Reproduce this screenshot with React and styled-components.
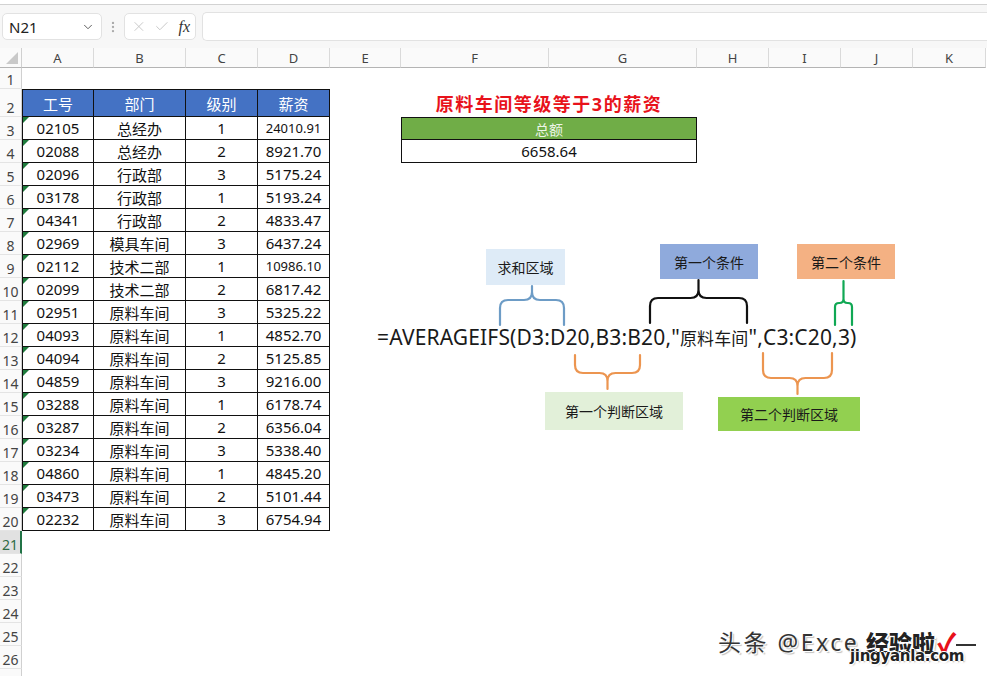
import React from "react";
import styled, { createGlobalStyle } from "styled-components";
import { ChevronDown, X, Check, EllipsisVertical } from "lucide-react";

const GlobalStyle = createGlobalStyle`
  body {
    margin: 0;
    background: #fff;
    font-family: "Noto Sans", "Noto Sans CJK SC", sans-serif;
  }
`;

const COLS = ["A", "B", "C", "D", "E", "F", "G", "H", "I", "J", "K"];

const rows = [
  ["02105", "总经办", "1", "24010.91", true],
  ["02088", "总经办", "2", "8921.70"],
  ["02096", "行政部", "3", "5175.24"],
  ["03178", "行政部", "1", "5193.24"],
  ["04341", "行政部", "2", "4833.47"],
  ["02969", "模具车间", "3", "6437.24"],
  ["02112", "技术二部", "1", "10986.10", true],
  ["02099", "技术二部", "2", "6817.42"],
  ["02951", "原料车间", "3", "5325.22"],
  ["04093", "原料车间", "1", "4852.70"],
  ["04094", "原料车间", "2", "5125.85"],
  ["04859", "原料车间", "3", "9216.00"],
  ["03288", "原料车间", "1", "6178.74"],
  ["03287", "原料车间", "2", "6356.04"],
  ["03234", "原料车间", "3", "5338.40"],
  ["04860", "原料车间", "1", "4845.20"],
  ["03473", "原料车间", "2", "5101.44"],
  ["02232", "原料车间", "3", "6754.94"],
];

function Brace({ x, y, w, h, mid, color, down, r = 6 }) {
  const c = w / 2;
  const a = 1;
  const b = w - 1;
  const d = `M${a} ${h} V${mid + r} Q${a} ${mid} ${a + r} ${mid} H${c - r} Q${c} ${mid} ${c} ${mid - r} V1 M${c} ${mid - r} Q${c} ${mid} ${c + r} ${mid} H${b - r} Q${b} ${mid} ${b} ${mid + r} V${h}`;
  return (
    <BraceSvg $x={x} $y={y} width={w} height={h} viewBox={`0 0 ${w} ${h}`}>
      <g transform={down ? `translate(0 ${h}) scale(1 -1)` : undefined}>
        <path d={d} fill="none" stroke={color} strokeWidth="2.2" strokeLinecap="round" />
      </g>
    </BraceSvg>
  );
}

export default function App() {
  return (
    <Page>
      <GlobalStyle />
      <TopStrip />
      <FormulaBar>
        <NameBox>
          N21
          <ChevronDown size={14} color="#555" strokeWidth={1.6} />
        </NameBox>
        <Dots>
          <EllipsisVertical size={14} color="#aaa" />
        </Dots>
        <FxBox>
          <X size={17} color="#c4c4c4" strokeWidth={1.4} />
          <Check size={17} color="#c4c4c4" strokeWidth={1.4} />
          <Fx>fx</Fx>
        </FxBox>
        <FormulaInput />
      </FormulaBar>

      <Sheet>
        <Corner>
          <CornerTri />
        </Corner>
        {COLS.map((c) => (
          <ColHead key={c}>{c}</ColHead>
        ))}

        <RowHead>1</RowHead>
        <Blank $span={11} />

        <RowHead>2</RowHead>
        {["工号", "部门", "级别", "薪资"].map((t, i) => (
          <HeadCell key={t} $first={i === 0}>
            {t}
          </HeadCell>
        ))}
        <Blank />
        <Title $span={2}>原料车间等级等于3的薪资</Title>
        <Blank $span={4} />

        {rows.map((r, i) => {
          const n = i + 3;
          return (
            <React.Fragment key={n}>
              <RowHead>{n}</RowHead>
              <Cell $first $flag>
                {r[0]}
              </Cell>
              <Cell>{r[1]}</Cell>
              <Cell>{r[2]}</Cell>
              <Cell $small={r[4]}>{r[3]}</Cell>
              <Blank />
              {n === 3 && <TotalHead $span={2}>总额</TotalHead>}
              {n === 4 && <TotalValue $span={2}>6658.64</TotalValue>}
              {n > 4 && <Blank $span={2} />}
              <Blank $span={4} />
            </React.Fragment>
          );
        })}

        {[21, 22, 23, 24, 25, 26, 27].map((n) => (
          <React.Fragment key={n}>
            <RowHead $active={n === 21}>{n < 27 ? n : ""}</RowHead>
            <Blank $span={11} />
          </React.Fragment>
        ))}
      </Sheet>

      <Note $x={486} $y={249} $w={79} $h={36} $bg="#deebf7">求和区域</Note>
      <Note $x={660} $y={244} $w={98} $h={35} $bg="#8faadc">第一个条件</Note>
      <Note $x={797} $y={244} $w={98} $h={35} $bg="#f4b183">第二个条件</Note>
      <Note $x={545} $y={392} $w={138} $h={38} $bg="#e2f0d9">第一个判断区域</Note>
      <Note $x={718} $y={397} $w={142} $h={34} $bg="#92d050">第二个判断区域</Note>

      <Brace x={499} y={285} w={66} h={40} mid={15} color="#6d9cc6" r={8} />
      <Brace x={649} y={279} w={99} h={44} mid={19} color="#111" r={8} />
      <Brace x={834} y={280} w={19} h={45} mid={23} color="#10a854" r={4} />
      <Brace x={574} y={355} w={67} h={35} mid={17} color="#ec9550" down r={8} />
      <Brace x={762} y={353} w={71} h={42} mid={17} color="#ec9550" down r={8} />

      <Formula>
        =AVERAGEIFS(D3:D20,B3:B20,"<Cjk>原料车间</Cjk>",C3:C20,3)
      </Formula>

      <Watermark>
        <WmText>头条 @Exce</WmText>
        <WmLogo>
          经验啦<WmCheck>✓</WmCheck>
        </WmLogo>
        <WmSite>jingyanla.com</WmSite>
        <WmDash />
      </Watermark>
    </Page>
  );
}

const Page = styled.div`
  position: relative;
  width: 987px;
  height: 676px;
  overflow: hidden;
  background: #fff;
`;

const TopStrip = styled.div`
  height: 4px;
  background: #fff;
  border-bottom: 1px solid #d2d2d2;
`;

const FormulaBar = styled.div`
  display: flex;
  align-items: center;
  height: 43px;
  padding: 0 0 0 2px;
  background: #f7f7f7;
  box-sizing: border-box;
`;

const NameBox = styled.div`
  display: flex;
  align-items: center;
  justify-content: space-between;
  width: 100px;
  height: 27px;
  box-sizing: border-box;
  padding: 0 6px;
  background: #fff;
  border: 1px solid #e2e2e2;
  border-radius: 5px;
  font-size: 15px;
  color: #222;
`;

const Dots = styled.div`
  display: flex;
  width: 22px;
  justify-content: center;
`;

const FxBox = styled.div`
  display: flex;
  align-items: center;
  gap: 7px;
  width: 72px;
  height: 27px;
  box-sizing: border-box;
  padding: 0 5px 0 6px;
  background: #fff;
  border: 1px solid #e2e2e2;
  border-radius: 5px;
`;

const Fx = styled.span`
  font-family: "Liberation Serif", serif;
  font-style: italic;
  font-size: 16px;
  color: #333;
  margin-left: 2px;
`;

const FormulaInput = styled.div`
  flex: 1;
  height: 27px;
  margin-left: 6px;
  background: #fff;
  border: 1px solid #e2e2e2;
  border-right: none;
  border-radius: 5px 0 0 5px;
`;

const Sheet = styled.div`
  display: grid;
  grid-template-columns: 22px 72px 92px 72px 72px 71px 148px 148px 72px 72px 72px 73px;
  grid-template-rows: 20px 21px 28px repeat(25, 23px);
`;

const Corner = styled.div`
  position: relative;
  background: #fafafa;
  border-right: 1px solid #d0d0d0;
  border-bottom: 1px solid #b4b4b4;
`;

const CornerTri = styled.div`
  position: absolute;
  right: 3px;
  bottom: 3px;
  width: 0;
  height: 0;
  border-left: 12px solid transparent;
  border-bottom: 12px solid #c9c9c9;
`;

const ColHead = styled.div`
  display: flex;
  align-items: center;
  justify-content: center;
  background: #fafafa;
  border-right: 1px solid #dadada;
  border-bottom: 1px solid #b4b4b4;
  font-size: 13px;
  color: #444;
`;

const RowHead = styled.div`
  display: flex;
  align-items: flex-end;
  justify-content: center;
  padding-bottom: 1px;
  box-sizing: border-box;
  background: ${(p) => (p.$active ? "#e1e1e1" : "#fafafa")};
  border-right: ${(p) => (p.$active ? "2px solid #217346" : "1px solid #d0d0d0")};
  border-bottom: 1px solid #e4e4e4;
  font-size: 14px;
  line-height: 1;
  color: ${(p) => (p.$active ? "#2f6b45" : "#444")};
`;

const Blank = styled.div`
  grid-column: span ${(p) => p.$span || 1};
`;

const HeadCell = styled.div`
  display: flex;
  align-items: center;
  justify-content: center;
  background: #4472c4;
  color: #fff;
  font-size: 15px;
  border-top: 1px solid #111;
  border-right: 1px solid #111;
  border-bottom: 1px solid #111;
  border-left: ${(p) => (p.$first ? "1px solid #111" : "none")};
`;

const Cell = styled.div`
  position: relative;
  display: flex;
  align-items: center;
  justify-content: center;
  font-size: ${(p) => (p.$small ? "13px" : "15px")};
  color: #111;
  border-right: 1px solid #111;
  border-bottom: 1px solid #111;
  border-left: ${(p) => (p.$first ? "1px solid #111" : "none")};

  ${(p) =>
    p.$flag &&
    `&::before {
      content: "";
      position: absolute;
      left: 0;
      top: 0;
      border-top: 6px solid #1e7b3c;
      border-right: 6px solid transparent;
    }`}
`;

const Title = styled.div`
  grid-column: span ${(p) => p.$span};
  display: flex;
  align-items: center;
  justify-content: center;
  color: #e8121b;
  font-weight: 700;
  font-size: 18px;
  letter-spacing: 1.5px;
`;

const TotalHead = styled.div`
  grid-column: span ${(p) => p.$span};
  display: flex;
  align-items: center;
  justify-content: center;
  background: #70ad47;
  color: #eef5e8;
  font-size: 14px;
  border: 1px solid #111;
`;

const TotalValue = styled.div`
  grid-column: span ${(p) => p.$span};
  display: flex;
  align-items: center;
  justify-content: center;
  font-size: 15px;
  color: #111;
  border: 1px solid #111;
  border-top: none;
`;

const Note = styled.div`
  position: absolute;
  left: ${(p) => p.$x}px;
  top: ${(p) => p.$y}px;
  width: ${(p) => p.$w}px;
  height: ${(p) => p.$h}px;
  display: flex;
  align-items: center;
  justify-content: center;
  background: ${(p) => p.$bg};
  font-size: 14px;
  color: #1a1a1a;
`;

const BraceSvg = styled.svg`
  position: absolute;
  left: ${(p) => p.$x}px;
  top: ${(p) => p.$y}px;
  overflow: visible;
`;

const Formula = styled.div`
  position: absolute;
  left: 377px;
  top: 323px;
  font-size: 21px;
  color: #1a1a1a;
  white-space: nowrap;
  letter-spacing: 0.15px;
`;

const Cjk = styled.span`
  font-size: 17px;
`;

const Watermark = styled.div`
  position: absolute;
  left: 716px;
  top: 622px;
  width: 265px;
  height: 50px;
`;

const WmText = styled.div`
  position: absolute;
  left: 2px;
  top: 2px;
  font-size: 23px;
  letter-spacing: 2.5px;
  color: #333;
  text-shadow: 1px 1px 0 #fff, 2px 2px 1px rgba(0, 0, 0, 0.25);
`;

const WmLogo = styled.div`
  position: absolute;
  left: 150px;
  top: 0;
  font-size: 23px;
  font-weight: 900;
  color: #222;
  text-shadow: -2px 0 #fff, 2px 0 #fff, 0 -2px #fff, 0 2px #fff, 2px 2px 2px rgba(0, 0, 0, 0.5);
`;

const WmCheck = styled.span`
  color: #e8101a;
  font-size: 26px;
  margin-left: 2px;
  text-shadow: none;
`;

const WmSite = styled.div`
  position: absolute;
  left: 134px;
  top: 25px;
  font-family: "DejaVu Sans", sans-serif;
  font-size: 15px;
  font-weight: 700;
  letter-spacing: -0.3px;
  color: #222;
  text-shadow: -1.5px 0 #fff, 1.5px 0 #fff, 0 -1.5px #fff, 0 1.5px #fff, 1px 1px 2px rgba(0, 0, 0, 0.5);
`;

const WmDash = styled.div`
  position: absolute;
  left: 240px;
  top: 22px;
  width: 20px;
  height: 2px;
  background: #333;
`;
